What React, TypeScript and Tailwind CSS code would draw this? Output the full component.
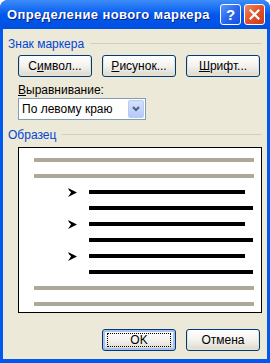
import React from "react";

const font = { fontFamily: '"Liberation Sans", Arial, sans-serif' };

function XpButton({ children, focused = false }: { children: React.ReactNode; focused?: boolean }) {
  return (
    <div
      className={
        "w-[74px] h-[22px] rounded-[3px] border border-[#003c74] bg-gradient-to-b from-[#ffffff] via-[#f3f2ee] to-[#dcd8cc] flex items-center justify-center text-[12px] text-black " +
        (focused ? "shadow-[inset_0_0_0_2px_#a9c1f0]" : "shadow-[inset_0_-1px_0_1px_#e4e0d4]")
      }
    >
      {focused ? (
        <div className="w-[64px] h-[14px] border border-dotted border-black flex items-center justify-center leading-none">
          {children}
        </div>
      ) : (
        <span className="leading-none">{children}</span>
      )}
    </div>
  );
}

function GroupLabel({ text }: { text: string }) {
  return (
    <div className="flex items-center h-[13px] gap-[6px]">
      <span className="text-[12px] leading-none text-[#0046d5]">{text}</span>
      <div className="flex-1 h-px bg-[#d0d0bf] mr-[5px]" />
    </div>
  );
}

function Arrow() {
  return (
    <svg width="9" height="9" viewBox="0 0 9 9">
      <path d="M0 0 L9 4.5 L0 9 L3 4.5 Z" fill="#000" />
      <path d="M1 1 L2 3" stroke="#000" strokeWidth="1" />
    </svg>
  );
}

function Line({ gray = false, short = false, bullet = false }: { gray?: boolean; short?: boolean; bullet?: boolean }) {
  if (gray) return <div className="ml-[15px] w-[220px] h-[4px] bg-[#aca899]" />;
  return (
    <div className="flex items-center h-[4px]">
      <div className="w-[49px]" />
      <div className="w-[9px] flex items-center">{bullet && <Arrow />}</div>
      <div className="w-[12px]" />
      <div className={(short ? "w-[156px]" : "w-[164px]") + " h-[4px] bg-black"} />
    </div>
  );
}

export default function App() {
  return (
    <div className="w-[270px] h-[363px] flex flex-col bg-[#0058ee] rounded-t-[8px] overflow-hidden select-none" style={font}>
      <div className="h-[29px] flex items-center pl-[7px] pr-[5px] bg-gradient-to-b from-[#3c8cf8] via-[#0058ee] to-[#0050e0]">
        <span className="flex-1 text-white font-bold text-[13px] tracking-[0.4px] [text-shadow:1px_1px_0_#0a1e8c]">
          Определение нового маркера
        </span>
        <div className="w-[21px] h-[21px] rounded-[3px] border border-white bg-gradient-to-br from-[#5a94ff] via-[#2a67f0] to-[#1a4fd8] flex items-center justify-center text-white font-bold text-[15px] leading-none">
          ?
        </div>
        <div className="ml-[3px] w-[21px] h-[21px] rounded-[3px] border border-white bg-gradient-to-br from-[#f08a60] via-[#e0502a] to-[#c83c18] flex items-center justify-center">
          <svg width="11" height="11" viewBox="0 0 11 11">
            <path d="M1.5 1.5 L9.5 9.5 M9.5 1.5 L1.5 9.5" stroke="#fff" strokeWidth="2.2" strokeLinecap="square" />
          </svg>
        </div>
      </div>
      <div className="flex-1 mx-[3px] mb-[4px] bg-[#ece9d8] pt-[8px] pl-[5px] flex flex-col">
        <GroupLabel text="Знак маркера" />
        <div className="mt-[5px] pl-[10px] flex gap-[10px]">
          <XpButton>С<u>и</u>мвол...</XpButton>
          <XpButton><u>Р</u>исунок...</XpButton>
          <XpButton><u>Ш</u>рифт...</XpButton>
        </div>
        <div className="mt-[7px] pl-[10px] h-[13px] text-[12px] leading-none text-black">
          <u>В</u>ыравнивание:
        </div>
        <div className="mt-[1px] ml-[10px] w-[128px] h-[22px] border border-[#7f9db9] bg-white flex items-center p-[1px]">
          <span className="flex-1 pl-[2px] text-[12px] leading-none text-black">По левому краю</span>
          <div className="w-[16px] h-full rounded-[2px] bg-gradient-to-b from-[#d5e2fd] to-[#b4c8f6] border border-[#b7cbf5] flex items-center justify-center">
            <svg width="8" height="6" viewBox="0 0 8 6">
              <path d="M1 1 L4 4 L7 1" stroke="#4d6185" strokeWidth="2" fill="none" />
            </svg>
          </div>
        </div>
        <div className="mt-[8px]">
          <GroupLabel text="Образец" />
        </div>
        <div className="mt-[6px] ml-[10px] w-[244px] h-[166px] border border-black bg-white pt-[10px] flex flex-col gap-[12px]">
          <Line gray />
          <Line gray />
          <Line short bullet />
          <Line />
          <Line short bullet />
          <Line />
          <Line short bullet />
          <Line />
          <Line gray />
          <Line gray />
        </div>
        <div className="mt-[16px] pl-[94px] flex gap-[10px]">
          <XpButton focused>OK</XpButton>
          <XpButton>Отмена</XpButton>
        </div>
      </div>
    </div>
  );
}
